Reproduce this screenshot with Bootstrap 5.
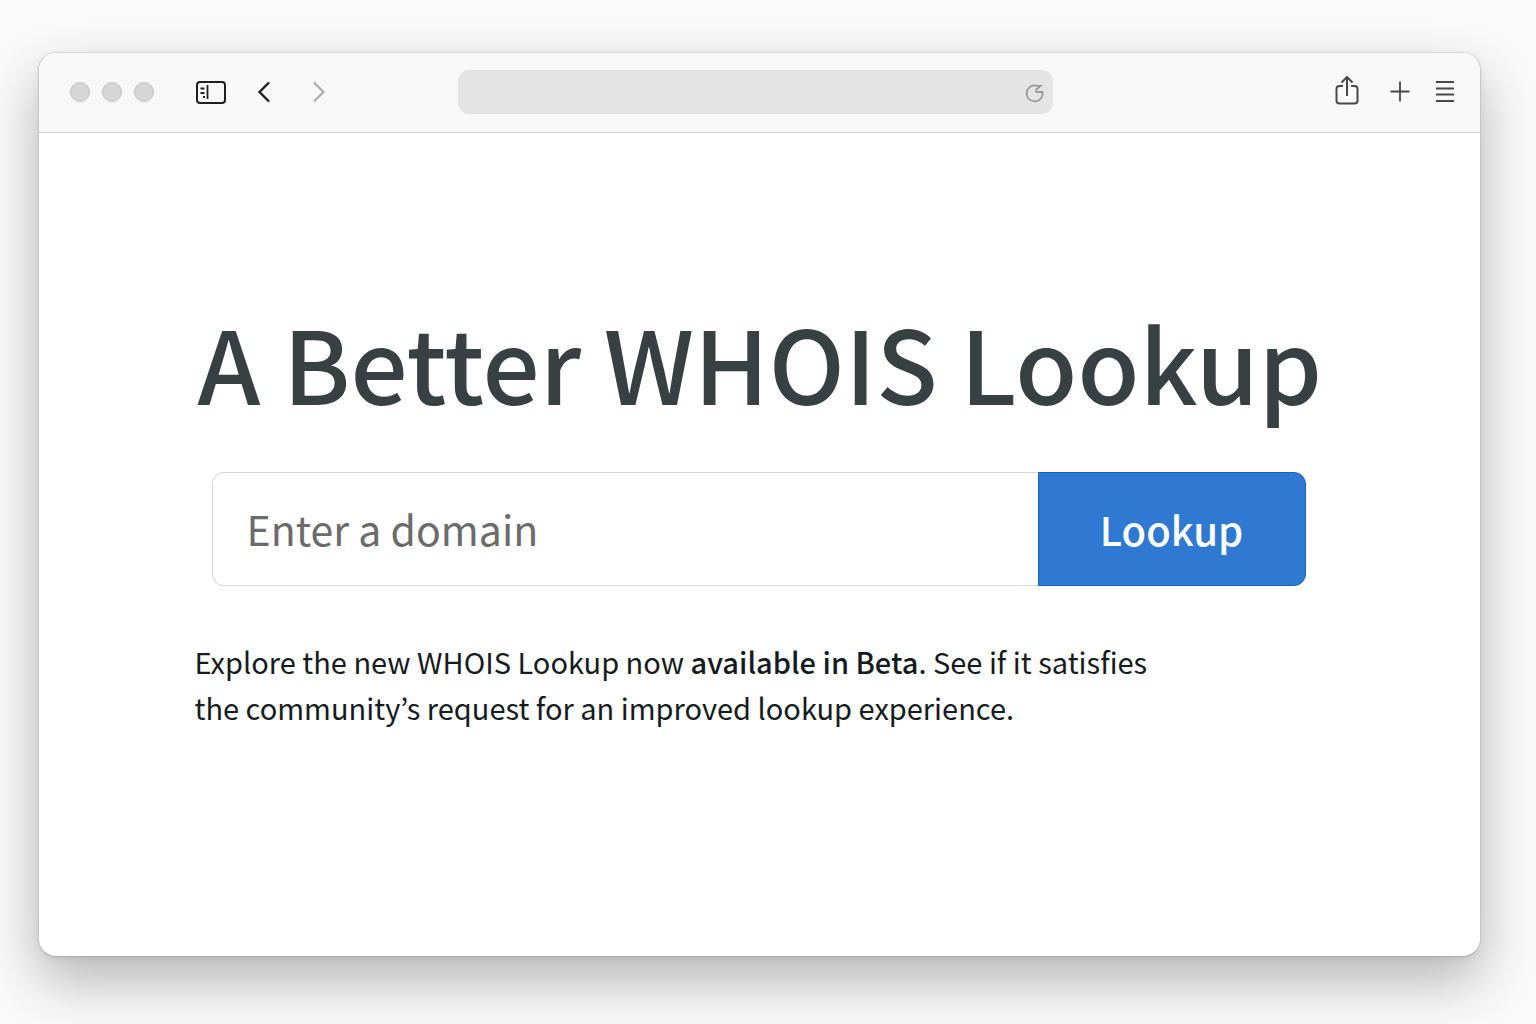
<!DOCTYPE html>
<html lang="en">
<head>
<meta charset="utf-8">
<meta name="viewport" content="width=device-width, initial-scale=1">
<title>A Better WHOIS Lookup</title>
<link href="https://cdn.jsdelivr.net/npm/bootstrap@5.3.0/dist/css/bootstrap.min.css" rel="stylesheet">
<style>
  body {
    background: #fafafa;
    color: #151b20;
    font-family: "Noto Sans CJK KR", "Noto Sans", sans-serif;
    padding: 52px 55px 67px 38px;
  }
  .browser {
    min-height: calc(100vh - 119px);
    background: #fff;
    border: 1px solid #c6c6c6;
    border-top-color: #d8d8d8;
    border-bottom-color: #adadad;
    border-radius: 18px;
    box-shadow: 0 24px 56px rgba(0, 0, 0, .28), 0 2px 6px rgba(0, 0, 0, .06);
    overflow: hidden;
  }
  .toolbar {
    height: 80px;
    padding: 0 20px 2px 31px;
    background: #f8f8f8;
    border-bottom: 1px solid #d2d2d2;
  }
  .toolbar-start { flex: 0 0 388px; }
  .traffic-lights { gap: 12px; margin-right: 42px; }
  .traffic-light {
    width: 20px;
    height: 20px;
    border-radius: 50%;
    background: #d6d6d6;
    border: 1px solid #c2c2c2;
  }
  .tool {
    border: 0;
    padding: 0;
    background: transparent;
    color: #48484a;
    line-height: 0;
  }
  .tool svg { display: block; }
  .tool-dark { color: #1f2022; }
  .tool:disabled { color: #adadad; }
  .address {
    flex: 0 1 595px;
    height: 44px;
    padding: 0 8px 0 16px;
    border-radius: 11px;
    background: #e4e4e4;
  }
  .address input { min-width: 0; outline: 0; }
  .address .tool { color: #9a9a9a; }
  .hero {
    max-width: 1134px;
    padding-top: 156px;
  }
  .hero h1 {
    font-size: 101px;
    line-height: 144px;
    font-weight: 500;
    color: #384044;
    margin: 0 0 39px;
    padding-left: 5px;
  }
  .search { width: auto; margin: 0 21px 52px 19px; height: 114px; }
  .search .form-control {
    border: 1px solid #d8d8d8;
    border-right: 0;
    border-radius: 12px 0 0 12px;
    padding: 0 34px;
    font-size: 41px;
    color: #151b20;
  }
  .search .form-control::placeholder { color: #6b6b6b; opacity: 1; }
  .search .btn {
    width: 268px;
    background: #2f79d2;
    border: 1px solid #1763c6;
    border-radius: 0 12px 12px 0;
    font-size: 40px;
    font-weight: 500;
    color: #fff;
  }
  .intro {
    max-width: 1000px;
    padding-left: 2px;
    font-size: 29px;
    line-height: 46px;
  }
  .intro strong { font-weight: 500; }
</style>
</head>
<body>
<div class="browser">
  <header class="toolbar d-flex align-items-center">
    <div class="toolbar-start d-flex align-items-center">
      <div class="traffic-lights d-flex">
        <span class="traffic-light"></span>
        <span class="traffic-light"></span>
        <span class="traffic-light"></span>
      </div>
      <button class="tool tool-dark" type="button" aria-label="Sidebar">
        <svg width="30" height="24" viewBox="0 0 30 24" fill="none" stroke="currentColor" stroke-width="2"><rect x="1" y="2" width="28" height="21" rx="3"/><path d="M11.500 5v14M4.500 8.500h4M4.500 13h4M7 17h2" stroke-width="1.800"/></svg>
      </button>
      <button class="tool tool-dark ms-4" type="button" aria-label="Back">
        <svg width="30" height="24" viewBox="0 0 30 24" fill="none" stroke="currentColor" stroke-width="2.400"><path d="M19 2.500 9.500 12l9.500 9.500"/></svg>
      </button>
      <button class="tool ms-4" type="button" aria-label="Forward" disabled>
        <svg width="30" height="24" viewBox="0 0 30 24" fill="none" stroke="currentColor" stroke-width="2.200"><path d="m10 2.500 9.500 9.500-9.500 9.500"/></svg>
      </button>
    </div>
    <div class="address d-flex align-items-center">
      <input class="flex-grow-1 border-0 bg-transparent" type="text" aria-label="Address">
      <button class="tool" type="button" aria-label="Reload">
        <svg width="22" height="22" viewBox="0 0 22 22" fill="none" stroke="currentColor" stroke-width="1.800"><path d="M14 4.800A8 8 0 1 0 19.500 11H12.500"/><path d="M12.300 9.500 17.500 4.800H13.500"/></svg>
      </button>
    </div>
    <div class="d-flex align-items-center ms-auto">
      <button class="tool" type="button" aria-label="Share">
        <svg width="26" height="32" viewBox="0 0 26 32" fill="none" stroke="currentColor" stroke-width="2"><path d="M9 10H5.500a3 3 0 0 0-3 3v11.500a3 3 0 0 0 3 3h15a3 3 0 0 0 3-3V13a3 3 0 0 0-3-3H17M13 20V1M7.500 6.500 13 1l5.500 5.500"/></svg>
      </button>
      <button class="tool ms-4" type="button" aria-label="New tab">
        <svg width="32" height="24" viewBox="0 0 32 24" fill="none" stroke="currentColor" stroke-width="1.800"><path d="M16 1.500v20M6.500 11.500h19"/></svg>
      </button>
      <button class="tool ms-3" type="button" aria-label="Menu">
        <svg width="28" height="24" viewBox="0 0 28 24" fill="none" stroke="currentColor" stroke-width="1.800"><path d="M4 2h18M4 8.500h18M4 14.500h18M4 21h18"/></svg>
      </button>
    </div>
  </header>
  <main class="hero mx-auto">
    <h1>A Better WHOIS Lookup</h1>
    <form class="search input-group">
      <input class="form-control" type="text" placeholder="Enter a domain" aria-label="Enter a domain">
      <button class="btn" type="submit">Lookup</button>
    </form>
    <p class="intro">Explore the new WHOIS Lookup now <strong>available in Beta</strong>. See if it satisfies the community’s request for an improved lookup experience.</p>
  </main>
</div>
<script src="https://cdn.jsdelivr.net/npm/bootstrap@5.3.0/dist/js/bootstrap.bundle.min.js"></script>
</body>
</html>
